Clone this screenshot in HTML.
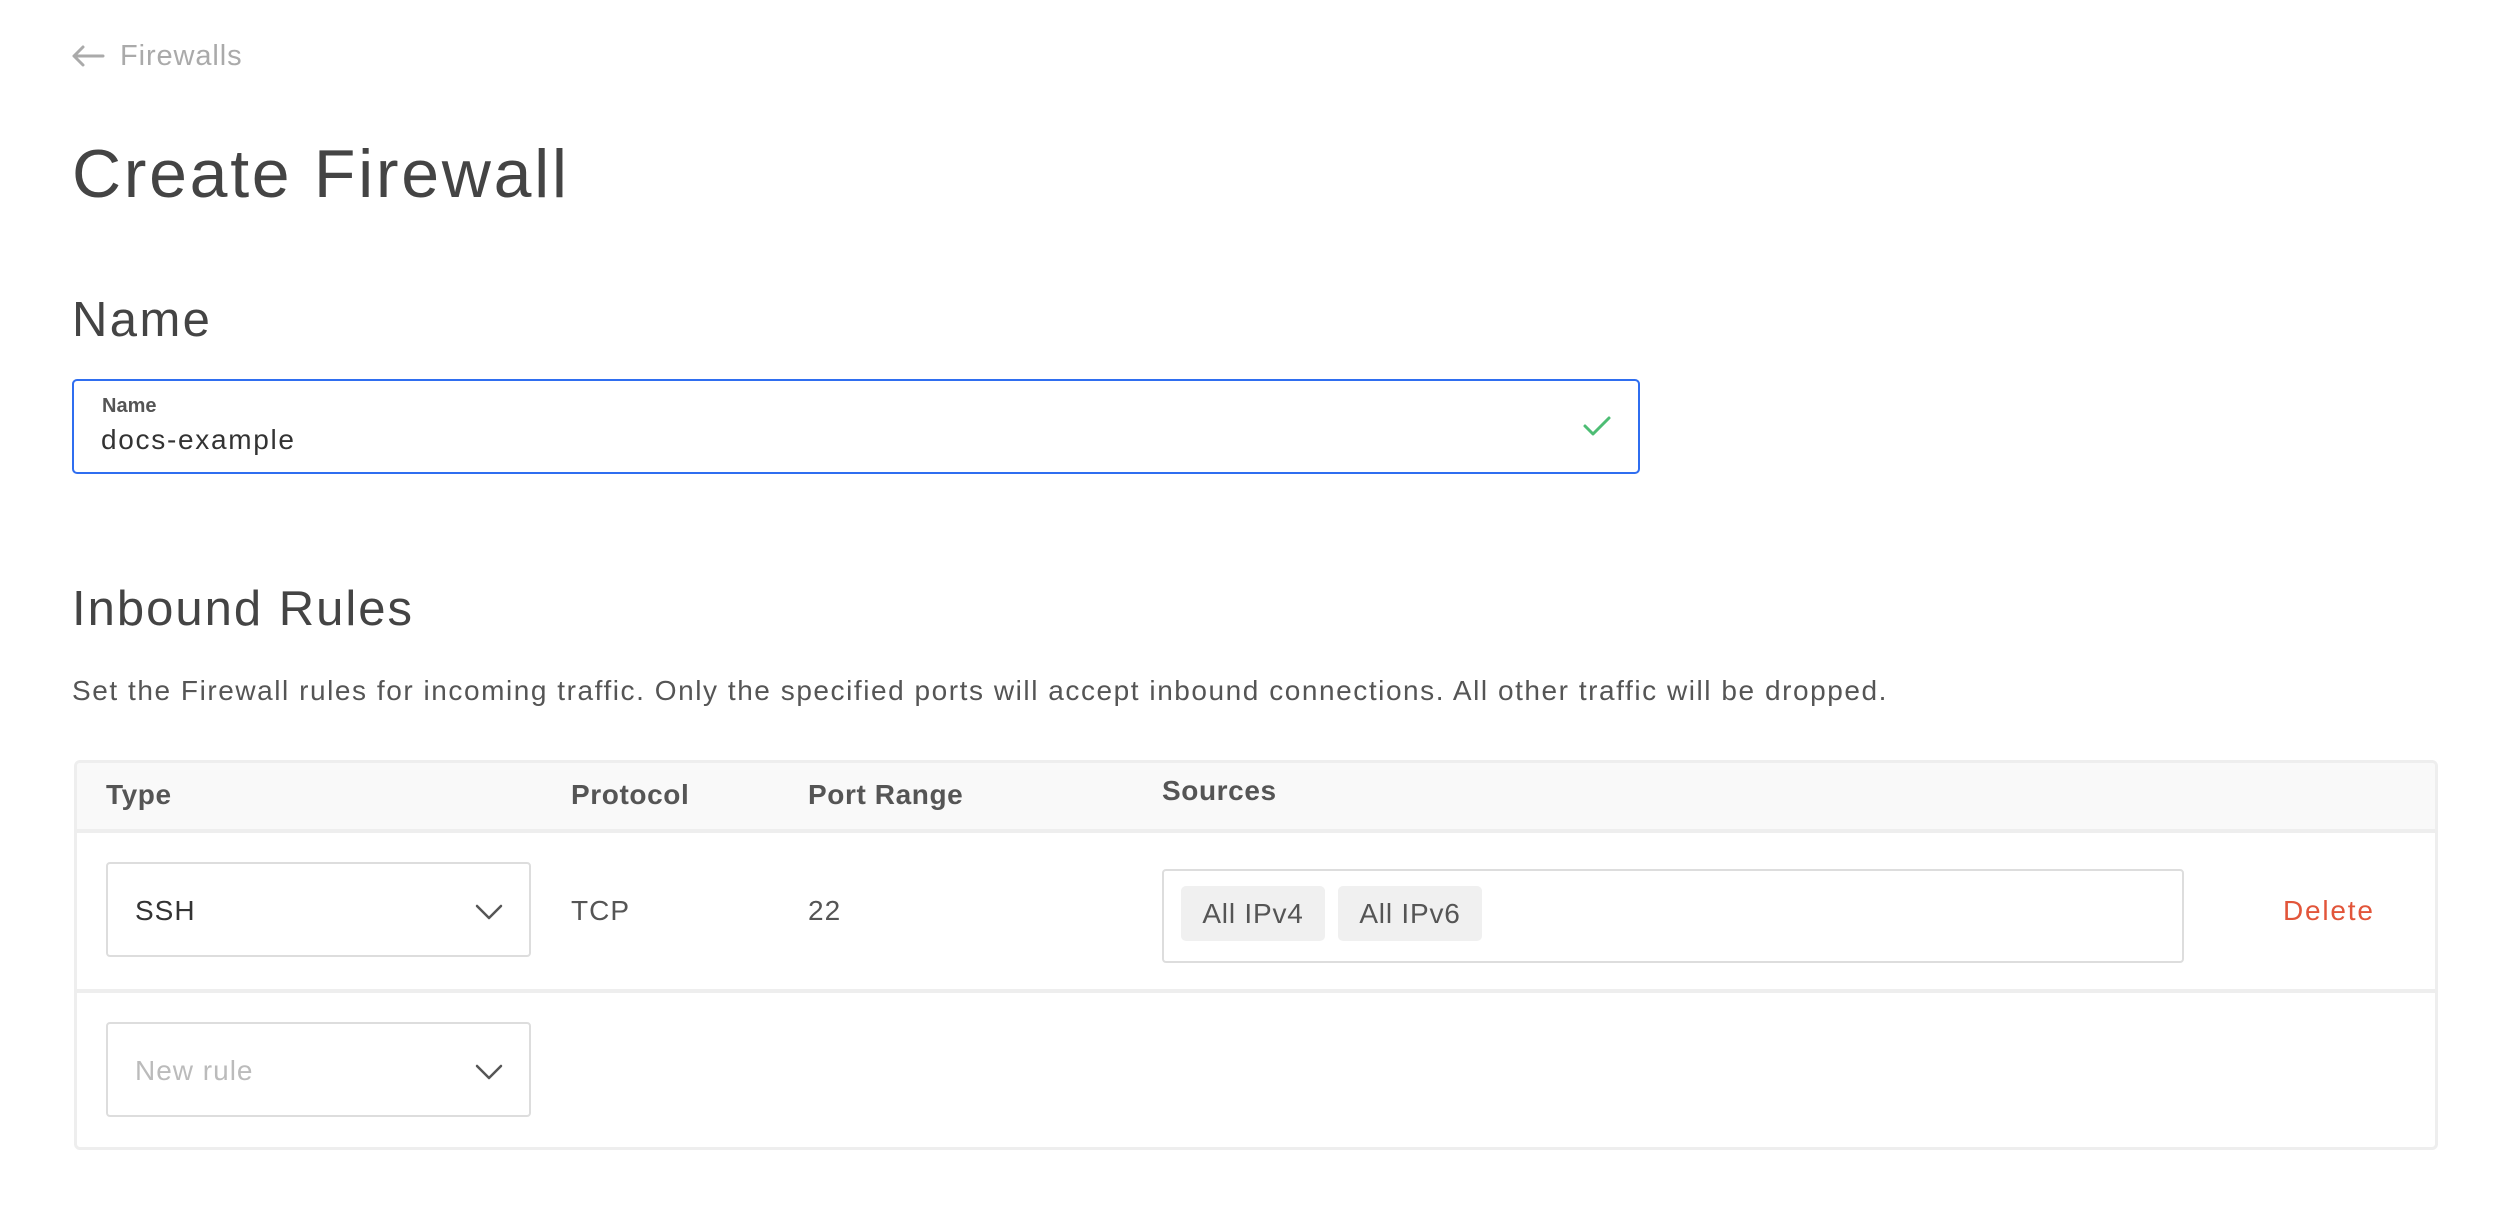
<!DOCTYPE html>
<html><head><meta charset="utf-8"><style>
*{margin:0;padding:0;box-sizing:border-box}
body{width:2508px;height:1206px;background:#fff;font-family:"Liberation Sans",sans-serif;position:relative;overflow:hidden;color:#444}
.a{position:absolute;white-space:nowrap;line-height:1}
.box{position:absolute}
.chip{position:absolute;top:886px;height:55px;width:144px;background:#f0f0f0;border-radius:5px;font-size:28px;color:#555;text-align:center;line-height:55px;letter-spacing:0.8px}
.h{font-size:28px;font-weight:bold;color:#555;letter-spacing:0.6px}
</style></head><body>
<svg class="box" style="left:70px;top:44px" width="36" height="24" viewBox="0 0 36 24"><path d="M33 12H4M13 3L4 12l9 9" fill="none" stroke="#aaa" stroke-width="3" stroke-linecap="round" stroke-linejoin="round"/></svg>
<div class="a" style="left:120px;top:42px;font-size:29px;color:#aaa;letter-spacing:0.9px">Firewalls</div>
<div class="a" style="left:72px;top:140px;font-size:68px;color:#444;letter-spacing:2.7px">Create Firewall</div>
<div class="a" style="left:72px;top:296px;font-size:49px;color:#444;letter-spacing:2.4px">Name</div>
<div class="box" style="left:72px;top:379px;width:1568px;height:95px;border:2px solid #2f6ef0;border-radius:5px"></div>
<div class="a" style="left:102px;top:396px;font-size:20px;font-weight:bold;color:#555">Name</div>
<div class="a" style="left:101px;top:426px;font-size:28px;color:#333;letter-spacing:1.7px">docs-example</div>
<svg class="box" style="left:1582px;top:414px" width="30" height="24" viewBox="0 0 30 24"><path d="M3 12l8 8L27 4" fill="none" stroke="#4dbd74" stroke-width="3" stroke-linecap="round" stroke-linejoin="round"/></svg>
<div class="a" style="left:72px;top:585px;font-size:49px;color:#444;letter-spacing:2px">Inbound Rules</div>
<div class="a" style="left:72px;top:677px;font-size:28px;color:#555;letter-spacing:1.55px">Set the Firewall rules for incoming traffic. Only the specified ports will accept inbound connections. All other traffic will be dropped.</div>
<div class="box" style="left:74px;top:760px;width:2364px;height:390px;border:3px solid #eee;border-radius:6px;overflow:hidden">
 <div style="height:70px;background:#f9f9f9;border-bottom:4px solid #eee"></div>
 <div style="position:absolute;left:0;right:0;top:226px;height:4px;background:#eee"></div>
</div>
<div class="a h" style="left:106px;top:781px">Type</div>
<div class="a h" style="left:571px;top:781px">Protocol</div>
<div class="a h" style="left:808px;top:781px">Port Range</div>
<div class="a h" style="left:1162px;top:777px">Sources</div>
<div class="box" style="left:106px;top:862px;width:425px;height:95px;border:2px solid #ddd;border-radius:4px"></div>
<div class="a" style="left:135px;top:897px;font-size:28px;color:#333;letter-spacing:1px">SSH</div>
<svg class="box" style="left:474px;top:902px" width="30" height="20" viewBox="0 0 30 20"><path d="M3 4l12 12L27 4" fill="none" stroke="#555" stroke-width="2.5" stroke-linecap="round" stroke-linejoin="round"/></svg>
<div class="a" style="left:571px;top:897px;font-size:28px;color:#555;letter-spacing:1px">TCP</div>
<div class="a" style="left:808px;top:897px;font-size:28px;color:#555;letter-spacing:1px">22</div>
<div class="box" style="left:1162px;top:869px;width:1022px;height:94px;border:2px solid #ddd;border-radius:4px"></div>
<div class="chip" style="left:1181px">All IPv4</div>
<div class="chip" style="left:1338px">All IPv6</div>
<div class="a" style="left:2283px;top:897px;font-size:28px;color:#e2553a;letter-spacing:1.8px">Delete</div>
<div class="box" style="left:106px;top:1022px;width:425px;height:95px;border:2px solid #ddd;border-radius:4px"></div>
<div class="a" style="left:135px;top:1057px;font-size:28px;color:#bbb;letter-spacing:1px">New rule</div>
<svg class="box" style="left:474px;top:1062px" width="30" height="20" viewBox="0 0 30 20"><path d="M3 4l12 12L27 4" fill="none" stroke="#555" stroke-width="2.5" stroke-linecap="round" stroke-linejoin="round"/></svg>
</body></html>
